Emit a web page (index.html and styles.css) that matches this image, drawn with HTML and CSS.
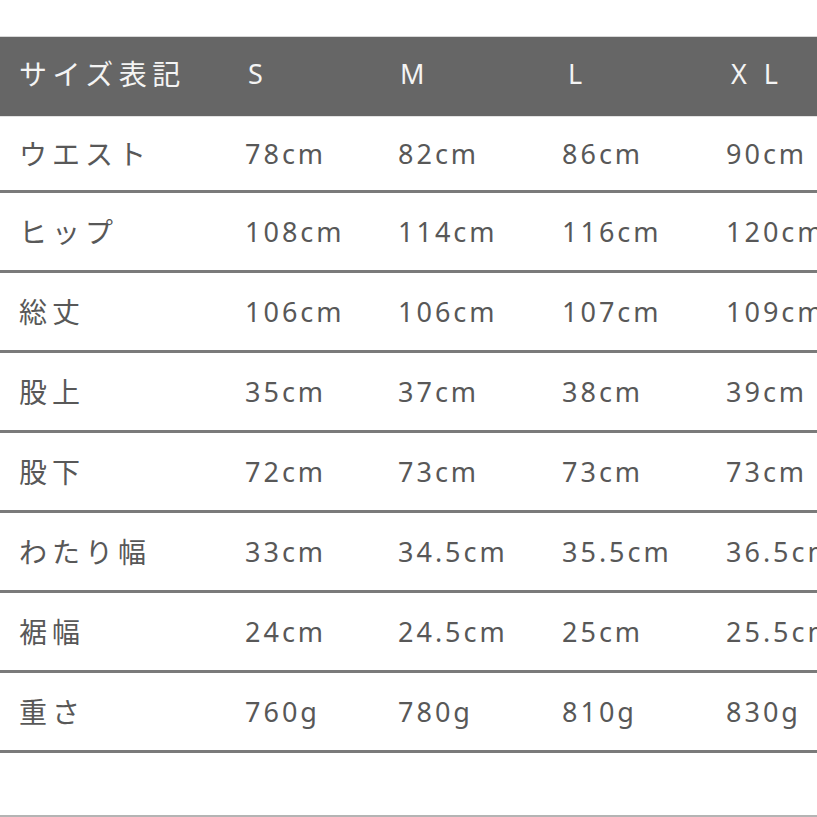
FILE: index.html
```html
<!DOCTYPE html>
<html lang="ja">
<head>
<meta charset="utf-8">
<title>サイズ表</title>
<link rel="stylesheet" href="styles.css">
</head>
<body>
<div class="sheet">
  <div class="row head">
    <div class="cell label">サイズ表記</div>
    <div class="cell hs">S</div>
    <div class="cell hm">M</div>
    <div class="cell hl">L</div>
    <div class="cell hxl">X L</div>
  </div>
  <div class="row first">
    <div class="cell label">ウエスト</div>
    <div class="cell val">78cm</div>
    <div class="cell val">82cm</div>
    <div class="cell val">86cm</div>
    <div class="cell val">90cm</div>
  </div>
  <div class="row">
    <div class="cell label">ヒップ</div>
    <div class="cell val">108cm</div>
    <div class="cell val">114cm</div>
    <div class="cell val">116cm</div>
    <div class="cell val">120cm</div>
  </div>
  <div class="row">
    <div class="cell label">総丈</div>
    <div class="cell val">106cm</div>
    <div class="cell val">106cm</div>
    <div class="cell val">107cm</div>
    <div class="cell val">109cm</div>
  </div>
  <div class="row">
    <div class="cell label">股上</div>
    <div class="cell val">35cm</div>
    <div class="cell val">37cm</div>
    <div class="cell val">38cm</div>
    <div class="cell val">39cm</div>
  </div>
  <div class="row">
    <div class="cell label">股下</div>
    <div class="cell val">72cm</div>
    <div class="cell val">73cm</div>
    <div class="cell val">73cm</div>
    <div class="cell val">73cm</div>
  </div>
  <div class="row">
    <div class="cell label">わたり幅</div>
    <div class="cell val">33cm</div>
    <div class="cell val">34.5cm</div>
    <div class="cell val">35.5cm</div>
    <div class="cell val">36.5cm</div>
  </div>
  <div class="row">
    <div class="cell label">裾幅</div>
    <div class="cell val">24cm</div>
    <div class="cell val">24.5cm</div>
    <div class="cell val">25cm</div>
    <div class="cell val">25.5cm</div>
  </div>
  <div class="row">
    <div class="cell label">重さ</div>
    <div class="cell val">760g</div>
    <div class="cell val">780g</div>
    <div class="cell val">810g</div>
    <div class="cell val">830g</div>
  </div>
  <div class="tail"></div>
</div>
</body>
</html>
```

FILE: styles.css
```css
html, body {
  margin: 0;
  padding: 0;
  background: #ffffff;
}

.sheet {
  width: 817px;
  height: 817px;
  overflow: hidden;
  padding-top: 36px;
  box-sizing: border-box;
  font-family: "Noto Sans", "Noto Sans CJK JP", sans-serif;
  color: #585858;
}

.row {
  display: grid;
  grid-template-columns: 245px 153px 164px 164px 1fr;
  align-items: center;
  height: 80px;
  box-sizing: border-box;
  border-bottom: 3px solid #7a7a7a;
  white-space: nowrap;
}

.row.first {
  height: 76px;
}

.row.head {
  height: 81px;
  background: #666666;
  color: #f4f4f4;
  border-top: 1px solid #d8d8d8;
  border-bottom: 1px solid #e2e2e2;
  padding-bottom: 6px;
}

.cell {
  font-size: 27px;
  line-height: 1;
}

.label {
  padding-left: 19px;
  font-size: 28px;
  letter-spacing: 5px;
}

.val {
  letter-spacing: 3px;
}

.head .cell {
  letter-spacing: 5px;
}

.head .label {
  letter-spacing: 5.5px;
}

.hs {
  padding-left: 3px;
}

.hm {
  padding-left: 2px;
}

.hl {
  padding-left: 6px;
}

.hxl {
  padding-left: 5px;
}

.tail {
  height: 62px;
  border-bottom: 2px solid #b4b4b4;
}
```
